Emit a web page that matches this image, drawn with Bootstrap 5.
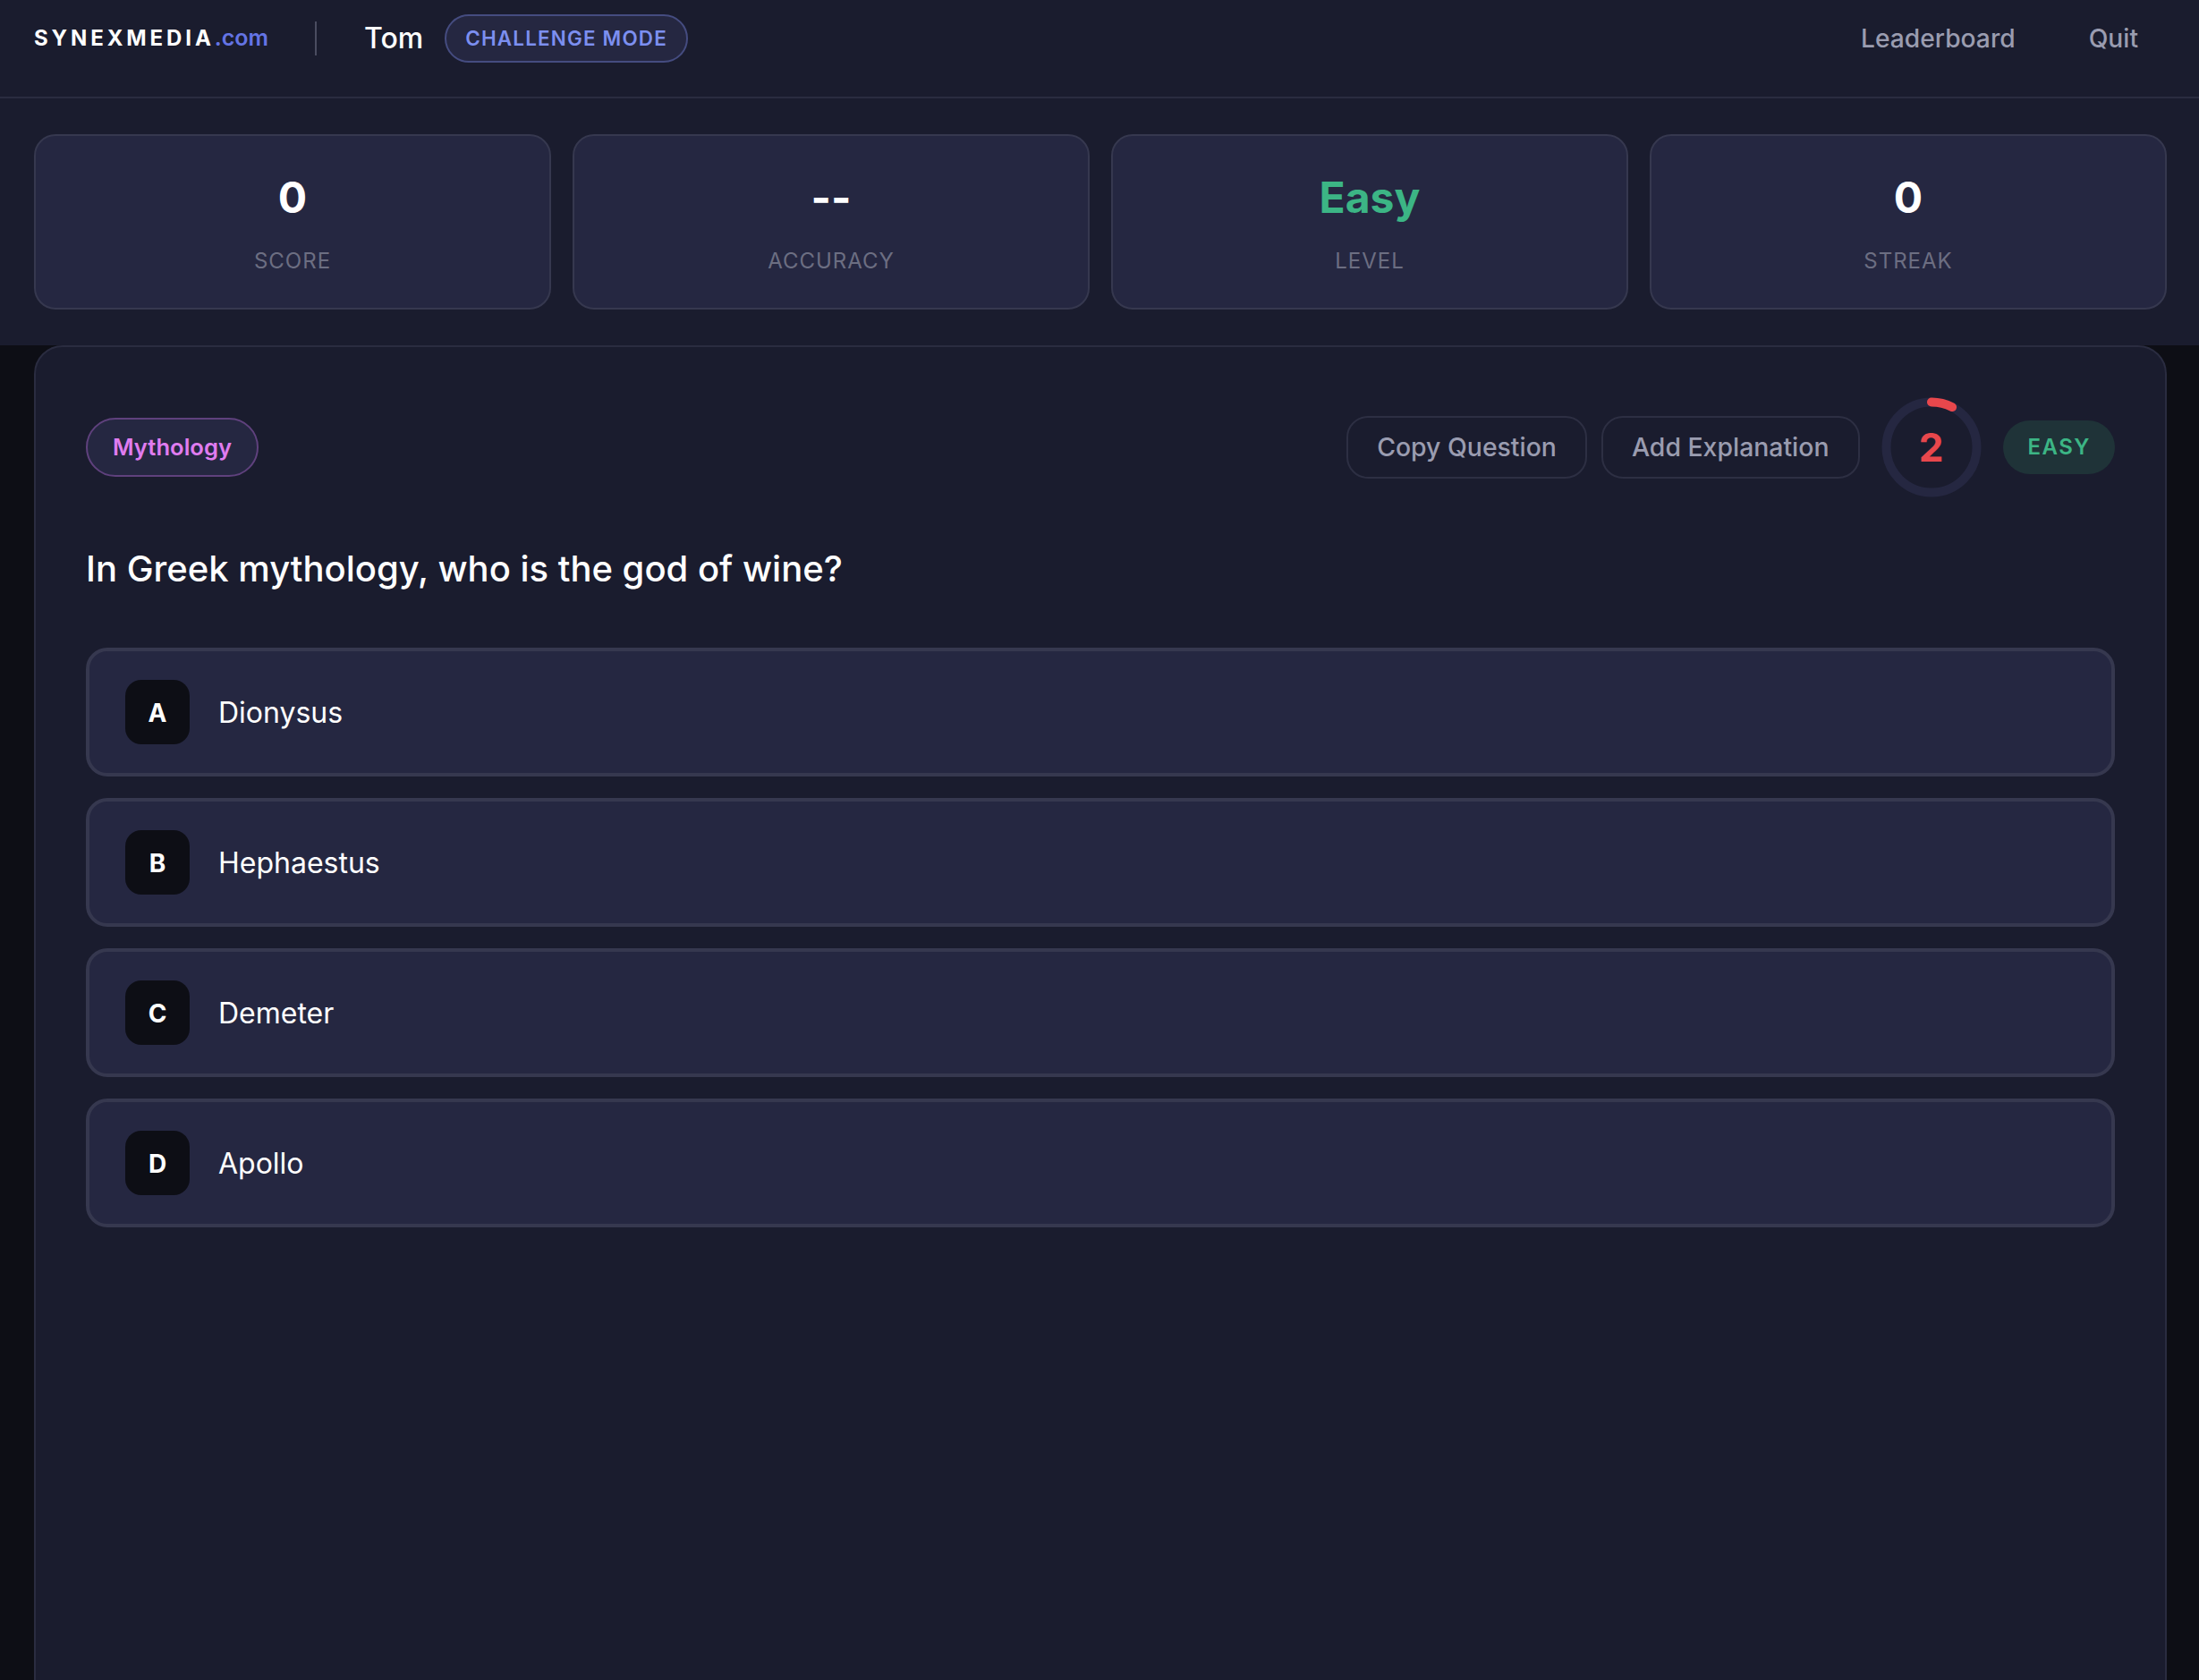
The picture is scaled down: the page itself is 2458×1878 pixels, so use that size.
<!DOCTYPE html>
<html lang="en">
<head>
  <meta charset="UTF-8" />
  <meta name="viewport" content="width=device-width, initial-scale=1.0"/>
  <title>SynexMedia Quiz</title>
  <link href="https://cdn.jsdelivr.net/npm/bootstrap@5.3.0/dist/css/bootstrap.min.css" rel="stylesheet"/>
  <style>
    html, body {
      height: 100%;
      overflow: hidden;
    }
    body {
      background-color: #0d0e15;
      font-family: "Inter", sans-serif;
      color: #fff;
    }
    .top-zone {
      background-color: #1a1c2e;
    }
    .top-head {
      height: 110px;
      padding: 16px 36px 0 38px;
      border-bottom: 2px solid #2a2c40;
    }
    .brand-name {
      font-size: 24px;
      font-weight: 700;
      letter-spacing: 3.9px;
    }
    .brand-tld {
      color: #6474e5;
      font-size: 25px;
      font-weight: 600;
      letter-spacing: 0;
    }
    .head-sep {
      width: 2px;
      height: 38px;
      background-color: #4a4c60;
      margin: 0 53px 0 52px;
    }
    .player-name {
      font-size: 32px;
      font-weight: 500;
      margin-right: 24px;
    }
    .mode-pill {
      height: 54px;
      padding: 0 21px;
      background-color: #252741;
      border: 2px solid #454c80;
      border-radius: 27px;
      color: #7c8ff0;
      font-size: 22.4px;
      font-weight: 600;
      letter-spacing: 1.2px;
    }
    .head-link {
      color: #9a9cb0;
      font-size: 28.2px;
      font-weight: 500;
      padding: 0 32px;
      text-decoration: none;
    }
    .head-link + .head-link {
      margin-left: 18px;
    }
    .stat-zone {
      height: 276px;
      padding: 40px 36px 0 38px;
    }
    .stat-box {
      height: 196px;
      padding-top: 40px;
      background-color: #252741;
      border: 2px solid #36384f;
      border-radius: 24px;
      text-align: center;
    }
    .stat-value {
      font-size: 48px;
      font-weight: 700;
      line-height: 58px;
    }
    .stat-green {
      color: #3cb585;
    }
    .stat-label {
      margin-top: 27px;
      color: #6c6e82;
      font-size: 24px;
      letter-spacing: 1px;
      line-height: 29px;
    }
    .quiz-panel {
      min-height: 1600px;
      margin: 0 36px 0 38px;
      padding: 56px;
      background-color: #1a1c2e;
      border: 2px solid #2a2c40;
      border-radius: 32px;
    }
    .topic-pill {
      height: 66px;
      padding: 0 28px;
      background-color: #252741;
      border: 2px solid #5f417d;
      border-radius: 33px;
      color: #e07cf0;
      font-size: 25.6px;
      font-weight: 600;
    }
    .ghost-btn {
      height: 70px;
      padding: 0 32px;
      background: transparent;
      border: 2px solid #2d2f43;
      border-radius: 24px;
      color: #9a9cb0;
      font-size: 28.4px;
      font-weight: 500;
    }
    .ghost-btn:hover {
      color: #fff;
      border-color: #454760;
    }
    .timer-ring {
      width: 112px;
      height: 112px;
      margin: 0 24px;
    }
    .timer-num {
      color: #e8474c;
      font-size: 44px;
      font-weight: 700;
    }
    .level-pill {
      height: 60px;
      padding: 0 27px 0 28px;
      background-color: #1f3338;
      border-radius: 30px;
      color: #3cb585;
      font-size: 24px;
      font-weight: 600;
      letter-spacing: 1.5px;
    }
    .question-text {
      margin: 56px 0 64px;
      font-size: 40px;
      font-weight: 500;
      line-height: 48px;
    }
    .answer-row {
      height: 144px;
      padding: 0 40px;
      background-color: #252741;
      border: 4px solid #36384f;
      border-radius: 24px;
      color: #fff;
      font-size: 32px;
      text-align: left;
    }
    .answer-letter {
      width: 72px;
      height: 72px;
      margin-right: 32px;
      padding-top: 2px;
      background-color: #0d0e15;
      border-radius: 18px;
      font-size: 28px;
      font-weight: 700;
    }
    .answer-text {
      padding-top: 2px;
    }
  </style>
</head>
<body>
  <div class="top-zone">
    <header class="top-head d-flex align-items-start">
      <div class="d-flex align-items-center" style="height:54px">
        <span class="brand-name">SYNEXMEDIA<span class="brand-tld">.com</span></span>
        <span class="head-sep"></span>
        <span class="player-name">Tom</span>
        <span class="mode-pill d-flex align-items-center">CHALLENGE MODE</span>
      </div>
      <nav class="d-flex align-items-center ms-auto" style="height:54px">
        <a class="head-link" href="#">Leaderboard</a>
        <a class="head-link" href="#">Quit</a>
      </nav>
    </header>

    <section class="stat-zone">
      <div class="row g-4">
        <div class="col-3">
          <div class="stat-box">
            <div class="stat-value">0</div>
            <div class="stat-label">SCORE</div>
          </div>
        </div>
        <div class="col-3">
          <div class="stat-box">
            <div class="stat-value">--</div>
            <div class="stat-label">ACCURACY</div>
          </div>
        </div>
        <div class="col-3">
          <div class="stat-box">
            <div class="stat-value stat-green">Easy</div>
            <div class="stat-label">LEVEL</div>
          </div>
        </div>
        <div class="col-3">
          <div class="stat-box">
            <div class="stat-value">0</div>
            <div class="stat-label">STREAK</div>
          </div>
        </div>
      </div>
    </section>
  </div>

  <main class="quiz-panel">
    <div class="d-flex align-items-center">
      <span class="topic-pill d-flex align-items-center">Mythology</span>
      <div class="d-flex align-items-center ms-auto">
        <button class="ghost-btn me-3" type="button">Copy Question</button>
        <button class="ghost-btn" type="button">Add Explanation</button>
        <div class="timer-ring position-relative d-flex align-items-center justify-content-center">
          <svg class="position-absolute top-0 start-0" width="112" height="112" viewBox="0 0 112 112">
            <circle cx="56" cy="56" r="50.5" fill="none" stroke="#252741" stroke-width="10"/>
            <circle cx="56" cy="56" r="50.5" fill="none" stroke="#e8474c" stroke-width="10" stroke-linecap="round" stroke-dasharray="24 314" transform="rotate(-90 56 56)"/>
          </svg>
          <span class="timer-num">2</span>
        </div>
        <span class="level-pill d-flex align-items-center">EASY</span>
      </div>
    </div>

    <h1 class="question-text">In Greek mythology, who is the god of wine?</h1>

    <div class="d-flex flex-column gap-4" id="answerList"></div>
  </main>

  <script src="https://cdn.jsdelivr.net/npm/bootstrap@5.3.0/dist/js/bootstrap.bundle.min.js"></script>
  <script>
    const answers = ["Dionysus", "Hephaestus", "Demeter", "Apollo"];
    const list = document.getElementById("answerList");

    answers.forEach((text, i) => {
      const row = document.createElement("div");
      row.className = "answer-row d-flex align-items-center";
      row.innerHTML = `
        <span class="answer-letter d-flex align-items-center justify-content-center">${"ABCD"[i]}</span>
        <span class="answer-text">${text}</span>
      `;
      list.appendChild(row);
    });
  </script>
</body>
</html>
